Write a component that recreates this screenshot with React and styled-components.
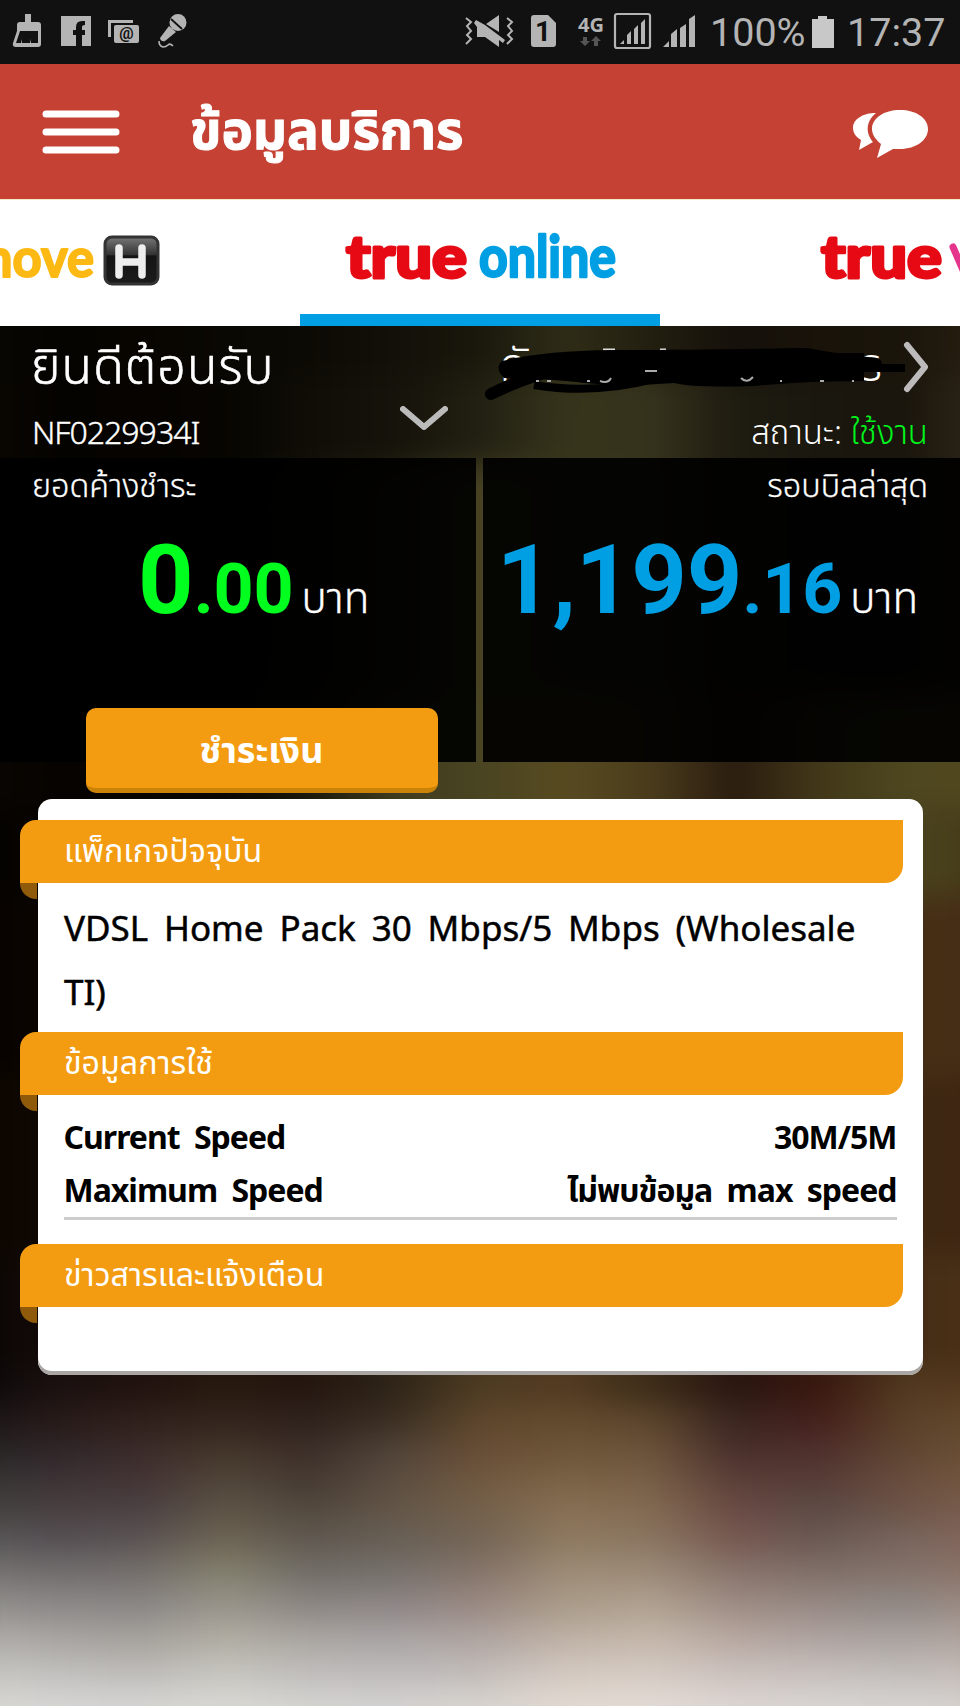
import React from "react";
import styled, { createGlobalStyle } from "styled-components";

// one entry per backdrop band: height, then colours spread evenly left to right
const bands = [
    [100, "#080704 #050401 #080500 #0a0803 #0c0a04 #121008 #1a180c #2f2d17 #221f10 #15100a #19130a #1a150b #282011"],
    [90, "#0b0802 #050300 #060300 #070501 #0f0d06 #15130a #222012 #37341c #36331d #1e1b10 #1a170f #1a150c #30281a"],
    [230, "#0b0802 #050300 #060300 #070501 #14130a #2b2915 #4b4524 #3a371c #38351d #1e1b10 #1a170f #1a150c #30281a"],
    [110, "#0b0703 #060300 #050401 #080702 #1a190c #403c1e #494422 #584a20 #4a3c1b #2a1c0f #423819 #4d471f #54471f"],
    [90, "#050300 #060300 #050401 #080702 #1a190c #403c1e #494422 #584a20 #4a3c1b #2a1c0f #423819 #4a431e #453a18"],
    [180, "#070200 #0b0501 #050401 #080702 #1a190c #403c1e #494422 #584a20 #4a3c1b #2a1c0f #423819 #452f16 #472c14"],
    [180, "#0b0500 #100801 #050401 #080702 #1a190c #403c1e #494422 #584a20 #4a3c1b #2a1c0f #423819 #3f2813 #3d2511"],
    [114, "#080403 #140b08 #1c0f0c #22130c #201409 #2e2417 #493b20 #513a20 #3c2c18 #24120d #38180f #452e16 #4a3016"],
    [34, "#0a0808 #1a1110 #21120f #28190f #241610 #2e2417 #4d3b22 #523a20 #3c2c18 #2a1510 #38180f #523920 #56391f"],
    [33, "#1a1517 #271a18 #2f201b #33251d #2e211c #3b2f23 #5e472c #634b2e #5c452c #3a2520 #45201c #5a4028 #644a2c"],
    [30, "#262424 #2f2629 #3b2c2b #443629 #3c2e29 #51453a #684d35 #6e563a #6b543b #49302c #4f302d #5f4632 #6c5134"],
    [27, "#353635 #3d3336 #443435 #51463a #453a33 #5b4d40 #705940 #7b6346 #785e46 #5a3f38 #563c36 #6a4e40 #77583e"],
    [29, "#40403e #483f3f #4a4042 #5d5345 #51473d #635547 #74604a #866f53 #826a51 #694943 #5c4a45 #6c5346 #7b5f4e"],
    [32, "#595857 #554f54 #5a5353 #6d6453 #5f5850 #675f55 #736455 #8f7a60 #897560 #765850 #6a5853 #77655d #85655a"],
    [33, "#757371 #706c6c #746e6b #83806c #716c66 #75706b #857469 #9c8b76 #9c8a78 #87736a #7f6e68 #84736b #8c7266"],
    [34, "#93918d #8b8987 #8a8685 #99948a #8c8683 #8d8686 #9a8982 #aa9b89 #b0a190 #9d8c84 #978984 #8f8985 #a08b82"],
    [33, "#b0aeaa #a8a5a2 #a5a19c #b1ada3 #aaa5a0 #a9a4a4 #aea4a0 #beb1a5 #c4b7aa #b7a7a0 #aea3a0 #a9a3a0 #b3a49d"],
    [33, "#c6c5c1 #c0bfbc #bdbbb8 #c5c4be #bebcba #bdbaba #c1bbb8 #d3c8c0 #d4cac2 #cac0bc #c6bfbc #c1bcb9 #c5bbb6"],
    [110, "#d8d7d3 #d6d5d3 #d5d4d2 #d9d8d3 #d5d3d0 #d4d2d0 #d8d3cf #e1d9d1 #e2dad4 #dcd5d2 #d8d4d2 #d6d3d1 #d7d1cd"],
];

const speeds = [
    { name: "Current Speed", value: "30M/5M" },
    { name: "Maximum Speed", value: "ไม่พบข้อมูล max speed" },
];

function NotificationIcons() {
    return (
        <svg width="190" height="64" viewBox="0 0 190 64" fill="#b4b4b4">
            <path d="M25 14h6v8h7q3 0 3 3v19q0 3-3 3H16q-4 0-3-4l4-12v-6q0-3 3-3h5zM20 31l-4 12h5l1-4v4h8v-4l1 4h7V31z" fillRule="evenodd" />
            <path d="M61 16h30v30h-9V35h3v-5h-3v-3q0-2 3-2v-4h-3q-6 0-6 6v3h-3v5h3v11H61z" />
            <path d="M108 37V20h25v3h-22v14z" />
            <rect x="114" y="25" width="25" height="18" rx="2" />
            <text x="126.500" y="39" fontSize="16" fontWeight="700" textAnchor="middle" fill="#111" fontFamily="Roboto, sans-serif">@</text>
            <circle cx="178" cy="22.500" r="8.500" />
            <path d="M169 26l7 6-11 9q-4 1-5-3z" />
            <path d="M171 19l11 10" stroke="#111" strokeWidth="1.800" />
            <path d="M159 41q0 5 4 6 3 0 5-2t5 1" fill="none" stroke="#b4b4b4" strokeWidth="1.600" />
        </svg>
    );
}

function SystemIcons() {
    return (
        <svg width="240" height="64" viewBox="460 0 240 64" fill="#b4b4b4">
            <path d="M466 18l5 4-4 4 4 5-4 4 4 4-5 5M507 18l5 4-4 4 4 5-4 4 4 4-5 5" fill="none" stroke="#b4b4b4" strokeWidth="2" />
            <path d="M474 23l2-3 9 5 20 15-2 3-4-3v7l-14-10h-8V27zM486 24l13-9v17z" />
            <path d="M534 15h14l8 8v21q0 3-3 3h-19q-3 0-3-3V18q0-3 3-3z" />
            <text x="543" y="41" fontSize="28" fontWeight="700" textAnchor="middle" fill="#111" fontFamily="Roboto, sans-serif">1</text>
            <text x="578" y="32" fontSize="20" fontWeight="700" textLength="26" lengthAdjust="spacingAndGlyphs" fontFamily="Open Sans, sans-serif">4G</text>
            <path d="M583 37h4v4h3l-5 5-5-5h3zM594 46h4v-5h3l-5-5-5 5h3z" fill="#555" />
            <rect x="615" y="14" width="35" height="34" rx="2" fill="none" stroke="#b4b4b4" strokeWidth="2.200" />
            <path d="M620 44l4-4v4zM627 44v-9l4-4v13zM634 44V29l4-4v19zM641 44V23l4-4v25zM663 47l6-6v6zM671 47V34l6-5v18zM680 47V28l6-4v23zM689 47V19l6-4v32z" />
        </svg>
    );
}

function TrueWord({ x }) {
    return (
        <text x={x} y="78" fontSize="59" fontWeight="900" textLength="121" lengthAdjust="spacingAndGlyphs" fill="#e60a14" stroke="#e60a14" strokeWidth="3">
            true
        </text>
    );
}

function BrandLogos() {
    return (
        <Logos viewBox="0 0 960 114">
            <defs>
                <linearGradient id="tile" x2="0" y2="1">
                    <stop offset="0" stopColor="#777" />
                    <stop offset=".38" stopColor="#333" />
                    <stop offset=".4" stopColor="#141414" />
                    <stop offset="1" stopColor="#1b1b1b" />
                </linearGradient>
            </defs>
            <text x="-30" y="77" fontSize="53" fontWeight="700" textLength="124" lengthAdjust="spacingAndGlyphs" fill="#fdb913" stroke="#fdb913" strokeWidth="2">
                move
            </text>
            <rect x="105" y="37" width="53" height="47" rx="7" fill="url(#tile)" stroke="#333" strokeWidth="3" />
            <path d="M119 48v27M142 48v27M119 62h23" stroke="#eee" strokeWidth="7.500" strokeLinecap="round" />
            <TrueWord x="346" />
            <text x="479" y="77" fontSize="57" fontWeight="700" textLength="137" lengthAdjust="spacingAndGlyphs" fill="#009fe3" stroke="#009fe3" strokeWidth="2.500">
                online
            </text>
            <TrueWord x="821" />
            <path d="M953 47l13 30" stroke="#e5348b" strokeWidth="7" strokeLinecap="round" />
        </Logos>
    );
}

function Amount({ whole, decimals, color }) {
    return (
        <AmountRow>
            <Whole $color={color}>{whole}</Whole>
            <Decimals $color={color}>.{decimals}</Decimals>
            <Unit>บาท</Unit>
        </AmountRow>
    );
}

function App() {
    return (
        <>
            <GlobalStyle />
            <Screen>
                <StatusBar>
                    <NotificationIcons />
                    <StatusRight>
                        <SystemIcons />
                        <Battery>100%</Battery>
                        <svg width="22" height="32" viewBox="0 0 22 32">
                            <path d="M6 0h9v3h7v29H0V3h6z" fill="#c8c8c8" />
                        </svg>
                        <Clock>17:37</Clock>
                    </StatusRight>
                </StatusBar>
                <Header>
                    <svg width="78" height="46" viewBox="0 0 78 46">
                        <path d="M4 5h70M4 23h70M4 41h70" stroke="#fff" strokeWidth="7" strokeLinecap="round" />
                    </svg>
                    <Title>ข้อมูลบริการ</Title>
                    <ChatIcon width="78" height="50" viewBox="0 0 78 50" fill="#fff">
                        <path d="M48 1c16 0 28 8 28 19S64 40 48 40l-7 0-16 9 4-14c-5-4-9-9-9-15C20 9 32 1 48 1z" />
                        <path d="M24 4C11 4 1 10 1 19c0 5 3 9 8 12L7 41l14-8c-7-8-8-20 3-29z" />
                    </ChatIcon>
                </Header>
                <Tabs>
                    <BrandLogos />
                    <ActiveLine />
                </Tabs>
                <Body>
                    <Backdrop>
                        {bands.map(([height, colors], i) => (
                            <Band key={i} $height={height} $colors={colors.split(" ").join(",")} />
                        ))}
                    </Backdrop>
                    <Welcome>
                        <Greeting>ยินดีต้อนรับ</Greeting>
                        <Customer>
                            <NameEdge>กั</NameEdge>
                            <NameEdge>ร</NameEdge>
                            <Scribble viewBox="480 340 430 70">
                                <path d="M603 350h12M660 350h6" stroke="#ddd" strokeWidth="3" />
                                <path d="M491 394q40-20 80-28 60-12 120-10 60 0 115-2 30 6 70 10" fill="none" stroke="#000" strokeWidth="12" strokeLinecap="round" />
                                <path d="M502 361q40-10 110-11 100 0 190-2l20 5h42v28q-60 0-110 5-60 2-80-3-50 4-90 0-30-4-80-5-10-10-2-17z" />
                                <path d="M860 368h45M534 385q60 10 120-6" fill="none" stroke="#000" strokeWidth="8" />
                                <path d="M536 381h3M547 381h4M587 381h3M600 381q8 3 11-3M645 371h12M741 378q6 6 12-1M780 381h2M820 381h4M852 381h2" fill="none" stroke="#aaa" strokeWidth="2" />
                            </Scribble>
                            <svg width="26" height="52" viewBox="0 0 26 52">
                                <path d="M5 4l18 22L5 48" fill="none" stroke="#bdbbbb" strokeWidth="6" strokeLinecap="round" strokeLinejoin="round" />
                            </svg>
                        </Customer>
                        <AccountId>NF0229934I</AccountId>
                        <ServiceState>
                            <span>สถานะ:</span> <Active>ใช้งาน</Active>
                        </ServiceState>
                        <Expand width="48" height="26" viewBox="0 0 48 26">
                            <path d="M3 3l21 18L45 3" fill="none" stroke="#bbb" strokeWidth="6" strokeLinejoin="round" strokeLinecap="round" />
                        </Expand>
                    </Welcome>
                    <Balances>
                        <Panel>
                            <PanelLabel>ยอดค้างชำระ</PanelLabel>
                            <Amount whole="0" decimals="00" color="#00ff1e" />
                            <PayButton>ชำระเงิน</PayButton>
                        </Panel>
                        <Panel $end>
                            <PanelLabel>รอบบิลล่าสุด</PanelLabel>
                            <Amount whole="1,199" decimals="16" color="#009fe3" />
                        </Panel>
                    </Balances>
                    <Card>
                        <Ribbon>แพ็กเกจปัจจุบัน</Ribbon>
                        <PackageName>VDSL Home Pack 30 Mbps/5 Mbps (Wholesale TI)</PackageName>
                        <Ribbon>ข้อมูลการใช้</Ribbon>
                        <SpeedList>
                            {speeds.map((speed) => (
                                <SpeedRow key={speed.name}>
                                    <span>{speed.name}</span>
                                    <span>{speed.value}</span>
                                </SpeedRow>
                            ))}
                        </SpeedList>
                        <Ribbon>ข่าวสารและแจ้งเตือน</Ribbon>
                    </Card>
                </Body>
            </Screen>
        </>
    );
}

export default App;

const GlobalStyle = createGlobalStyle`
    body {
        margin: 0;
        background: #000;
    }
    * {
        box-sizing: border-box;
    }
    svg {
        display: block;
        flex-shrink: 0;
    }
`;
const Screen = styled.div`
    display: flex;
    flex-direction: column;
    width: 960px;
    height: 1706px;
    overflow: hidden;
    font-family: "Noto Sans", "Noto Sans Thai", sans-serif;
    white-space: nowrap;
`;
const StatusBar = styled.div`
    display: flex;
    justify-content: space-between;
    height: 64px;
    flex-shrink: 0;
    background: #111;
`;
const StatusRight = styled.div`
    display: flex;
    align-items: center;
    width: 500px;
    color: #b4b4b4;
    font-family: Roboto, sans-serif;
    font-size: 39.5px;
    line-height: 67px;
`;
const Battery = styled.span`
    width: 102px;
    margin-left: 10px;
`;
const Clock = styled.span`
    margin-left: 13px;
`;
const Header = styled.header`
    display: flex;
    align-items: center;
    height: 135px;
    flex-shrink: 0;
    padding: 0 30px 0 42px;
    background: #c44133;
`;
const Title = styled.h1`
    flex: 1;
    margin: -6px 0 0 70px;
    color: #fff;
    font-size: 53px;
    line-height: 80px;
    -webkit-text-stroke: 1px #fff;
`;
const ChatIcon = styled.svg`
    margin-top: 4px;
`;
const Tabs = styled.nav`
    height: 127px;
    flex-shrink: 0;
    border-top: 1px solid #f3e9c8;
    background: #fff;
`;
const Logos = styled.svg`
    width: 960px;
    height: 114px;
    font-family: Lato, sans-serif;
    stroke-linejoin: round;
`;
const ActiveLine = styled.div`
    width: 360px;
    height: 12px;
    margin: 0 auto;
    background: #009fe3;
`;
const Body = styled.main`
    position: relative;
    z-index: 0;
    flex: 1;
    overflow: hidden;
    background: #0a0703;
`;
const Backdrop = styled.div`
    position: absolute;
    z-index: -1;
    inset: -50px 0 -60px;
    filter: blur(14px);
`;
const Band = styled.div`
    height: ${(props) => props.$height}px;
    margin: 0 -30px;
    background: linear-gradient(to right, ${(props) => props.$colors});
`;
const Welcome = styled.section`
    position: relative;
    display: grid;
    grid-template-columns: 1fr auto;
    grid-template-rows: 82px 50px;
    height: 132px;
    padding: 0 32px;
    color: #fff;
    font-weight: 300;
`;
const Greeting = styled.div`
    margin-left: -1px;
    font-size: 50px;
    letter-spacing: 1.1px;
    line-height: 78px;
    -webkit-text-stroke: 0.6px #fff;
`;
const Customer = styled.div`
    position: relative;
    display: flex;
    align-items: center;
    justify-content: space-between;
    width: 428px;
    font-size: 46px;
`;
const NameEdge = styled.span`
    &:nth-child(2) {
        margin: 0 20px 0 auto;
    }
`;
const Scribble = styled.svg`
    position: absolute;
    left: -20px;
    top: 14px;
    width: 430px;
    height: 70px;
`;
const AccountId = styled.div`
    font-size: 32px;
    letter-spacing: -1px;
    line-height: 48px;
    -webkit-text-stroke: 0.4px #fff;
`;
const ServiceState = styled.div`
    font-size: 33px;
    line-height: 47px;
    text-align: right;
`;
const Active = styled.span`
    color: #00f41c;
`;
const Expand = styled.svg`
    position: absolute;
    left: 400px;
    top: 80px;
`;
const Balances = styled.section`
    display: grid;
    grid-template-columns: 476px 477px;
    grid-template-rows: 304px;
    gap: 7px;
    height: 304px;
`;
const Panel = styled.div`
    display: flex;
    flex-direction: column;
    align-items: ${(props) => (props.$end ? "flex-end" : "flex-start")};
    min-height: 0;
    padding: 0 32px;
    background: rgba(0, 0, 0, 0.92);
    color: #fff;
`;
const PanelLabel = styled.div`
    height: 58px;
    flex-shrink: 0;
    font-size: 32.4px;
    font-weight: 300;
    line-height: 52px;
    -webkit-text-stroke: 0.3px #fff;
`;
const AmountRow = styled.div`
    display: flex;
    align-items: baseline;
    height: 192px;
    flex-shrink: 0;
    margin: 0 10px 0 106px;
    line-height: 129px;
`;
const Whole = styled.span`
    color: ${(props) => props.$color};
    font-family: Roboto, sans-serif;
    font-size: 97px;
    font-weight: 700;
    letter-spacing: -0.2px;
`;
const Decimals = styled(Whole)`
    font-size: 70px;
`;
const Unit = styled.span`
    margin-left: 8px;
    font-size: 42px;
    font-weight: 300;
    -webkit-text-stroke: 0.4px #fff;
`;
const PayButton = styled.button`
    width: 352px;
    height: 85px;
    flex-shrink: 0;
    margin-left: 53.5px;
    padding: 0;
    border: 0;
    border-bottom: 5px solid #cb8208;
    border-radius: 10px;
    background: #f39c12;
    color: #fff;
    font: 700 36px/83px "Noto Sans", "Noto Sans Thai", sans-serif;
`;
const Card = styled.section`
    width: 885px;
    height: 576px;
    margin: 37px 0 0 37.5px;
    padding-top: 21px;
    border-radius: 14px;
    background: #fff;
    box-shadow: inset 0 -4px 0 #aaa6a3;
`;
const Ribbon = styled.h2`
    position: relative;
    width: 883px;
    height: 63px;
    margin: 0 0 0 -17.5px;
    padding-left: 44px;
    border-radius: 16px 0 18px 0;
    background: #f39c12;
    color: #fff;
    font-size: 32.2px;
    font-weight: 400;
    line-height: 60px;

    &::after {
        content: "";
        position: absolute;
        left: 0;
        top: 63px;
        width: 17px;
        height: 16px;
        border-radius: 0 0 0 16px;
        background: #8f5b0b;
    }
`;
const PackageName = styled.p`
    height: 149px;
    margin: 0 26.5px;
    padding-top: 13px;
    color: #000;
    font-size: 35px;
    line-height: 64px;
    white-space: normal;
    word-spacing: 6.8px;
    -webkit-text-stroke: 0.5px #000;
`;
const SpeedList = styled.div`
    margin: 0 26px 24px;
    padding: 15px 0 1px;
    border-bottom: 3px solid #ccc;
`;
const SpeedRow = styled.div`
    display: flex;
    justify-content: space-between;
    height: 53px;
    color: #000;
    font-size: 32px;
    font-weight: 700;
    letter-spacing: -1px;
    line-height: 54px;
    word-spacing: 7px;
`;
